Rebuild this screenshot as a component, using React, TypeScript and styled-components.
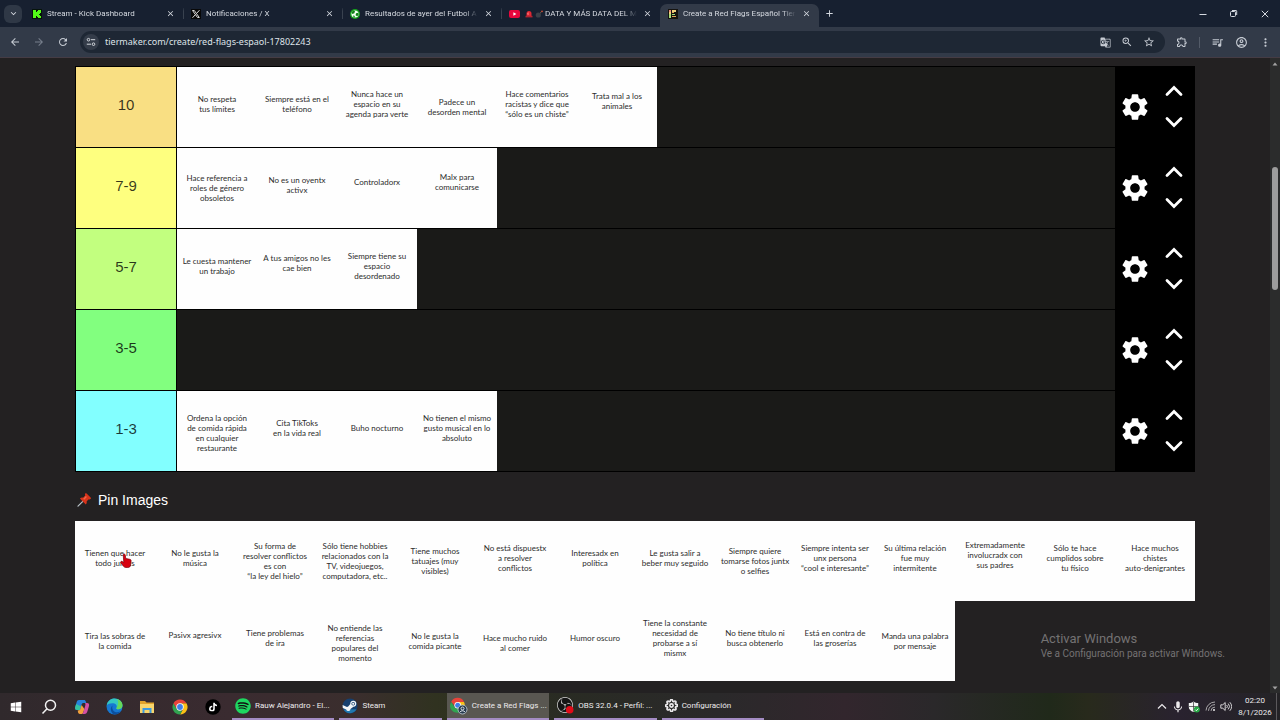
import React from "react";
import styled, { createGlobalStyle } from "styled-components";
import {
  MdAdd, MdArrowBack, MdArrowForward, MdClose, MdExpandMore, MdGTranslate, MdMoreVert,
  MdOutlineAccountCircle, MdOutlineExtension, MdQueueMusic, MdRefresh, MdSettings,
  MdStarOutline, MdZoomIn, MdMic,
} from "react-icons/md";
import { FaSpotify, FaTiktok, FaWindows } from "react-icons/fa";
import { SiObsstudio } from "react-icons/si";
import { FiSettings } from "react-icons/fi";

const uiFont = `Roboto, "Noto Sans", sans-serif`;
const addressFont = `"Noto Sans", "Open Sans", sans-serif`;
const pageFont = `"Liberation Sans", Arial, sans-serif`;
const tileFont = `Lato, "Open Sans", sans-serif`;

const GlobalStyle = createGlobalStyle`
  *, *::before, *::after { box-sizing: border-box; }
  body { margin: 0; background: #232122; font-family: ${pageFont}; }
  button { padding: 0; border: 0; background: none; color: inherit; font: inherit; cursor: pointer; }
  svg { display: block; flex: none; }
`;

const Screen = styled.div`
  display: flex;
  flex-direction: column;
  min-height: 100vh;
`;

/* Browser chrome */

const TabStrip = styled.header`
  display: flex;
  align-items: flex-end;
  height: 27px;
  background: #172030;
  color: #d5d9e0;
  font: 8px/12px ${uiFont};
`;

const TabSearch = styled.button`
  display: grid;
  place-items: center;
  align-self: center;
  flex: none;
  width: 18px;
  height: 18px;
  margin: 0 2px 0 4px;
  border-radius: 6px;
  background: #2f3846;
`;

const TabList = styled.div`
  display: flex;
  flex: 0 1 795px;
  min-width: 0;
`;

const Tab = styled.div<{ $active?: boolean; $divided?: boolean }>`
  display: flex;
  align-items: center;
  gap: 5px;
  flex: 1 1 0;
  min-width: 0;
  height: 23px;
  padding: 0 8px 4px;
  border-radius: 7px 7px 0 0;
  background: ${(p) => (p.$active ? "#323a48" : "transparent")};
  background-image: ${(p) => (p.$divided ? "linear-gradient(#39424f, #39424f)" : "none")};
  background-size: 1px 11px;
  background-position: left 4px;
  background-repeat: no-repeat;
`;

const TabTitle = styled.span`
  display: flex;
  align-items: center;
  gap: 2px;
  flex: 1;
  min-width: 0;
  white-space: nowrap;
  mask-image: linear-gradient(90deg, #000 88%, transparent);
`;

const IconButton = styled.button<{ $size: number }>`
  display: grid;
  place-items: center;
  flex: none;
  width: ${(p) => p.$size}px;
  height: ${(p) => p.$size}px;
`;

const NewTab = styled(IconButton)`
  align-self: center;
  margin-left: 4px;
`;

const WindowButtons = styled.div`
  display: flex;
  align-self: center;
  margin-left: auto;
`;

const WindowButton = styled.button`
  display: grid;
  place-items: center;
  width: 31px;
  height: 26px;
`;

const Toolbar = styled.nav`
  display: flex;
  align-items: center;
  height: 31px;
  padding: 0 3px;
  border-bottom: 1px solid #453c44;
  background: #323a48;
  color: #c6cbd3;
`;

const AddressBar = styled.label`
  display: flex;
  align-items: center;
  flex: 1;
  min-width: 0;
  height: 22px;
  margin: 0 5px;
  padding: 0 5px 0 3px;
  border-radius: 11px;
  background: #1e2734;
`;

const SiteInfo = styled.span`
  display: grid;
  place-items: center;
  flex: none;
  width: 16px;
  height: 16px;
  border-radius: 8px;
  background: #343c49;
`;

const Address = styled.input`
  flex: 1;
  min-width: 0;
  height: 16px;
  padding: 0 6px;
  border: 0;
  outline: 0;
  background: none;
  color: #dfe3e9;
  font: 9px/16px ${addressFont};
`;

const ToolDivider = styled.span`
  width: 1px;
  height: 11px;
  margin: 0 5px;
  background: #535b68;
`;

/* Tier list page */

const Viewport = styled.div`
  position: relative;
  display: flex;
  flex: 1;
`;

const Main = styled.main`
  flex: 1;
  min-width: 0;
  padding: 8px 16px 0;
`;

const Content = styled.div`
  max-width: 1120px;
  margin: 0 auto;
`;

const Board = styled.section`
  border: 1px solid #000;
  background: #000;
`;

const TierRow = styled.div`
  display: flex;
  min-height: 80px;

  & + & {
    margin-top: 1px;
  }
`;

const TierLabel = styled.div<{ $color: string }>`
  display: grid;
  place-items: center;
  flex: none;
  width: 100px;
  margin-right: 1px;
  padding-bottom: 4px;
  background: ${(p) => p.$color};
  color: rgba(0, 0, 0, 0.78);
  font-size: 15px;
  line-height: 18px;
`;

const DropZone = styled.div`
  display: flex;
  flex-wrap: wrap;
  flex: 1;
  background: #1a1a18;
`;

type Level = "high" | "upper" | "middle" | "lower";

const levelPadding: Record<Level, string> = {
  high: "0 0 12px",
  upper: "0 0 6px",
  middle: "0",
  lower: "4px 0 0",
};

const TileBox = styled.div<{ $level: Level }>`
  display: grid;
  place-items: center;
  width: 80px;
  height: 80px;
  padding: ${(p) => levelPadding[p.$level]};
  background: #fefefe;
  color: #2c2c2c;
  font: 8px/10px ${tileFont};
  text-align: center;
  white-space: pre;
  cursor: grab;
`;

const Controls = styled.div`
  display: flex;
  flex: none;
  align-items: center;
  width: 79px;
  padding-bottom: 1px;
  color: #fff;
`;

const SettingsButton = styled(IconButton)`
  width: 39px;
`;

const MoveButtons = styled.div`
  display: grid;
  gap: 11px;
  width: 40px;
  justify-items: center;
`;

const PinHeading = styled.h2`
  display: flex;
  align-items: center;
  gap: 7px;
  margin: 0;
  padding: 19px 0 12px 2px;
  color: #fff;
  font-size: 14px;
  font-weight: 400;
  line-height: 18px;
`;

const PinArea = styled.section`
  display: flex;
  flex-wrap: wrap;
`;

const Scrollbar = styled.div`
  display: flex;
  flex-direction: column;
  align-items: center;
  justify-content: space-between;
  flex: none;
  width: 10px;
  padding: 4px 0 3px;
  background: #2b2c2c;
`;

const ScrollTrack = styled.div`
  flex: 1;
  padding-top: 101px;
`;

const ScrollThumb = styled.div`
  width: 6px;
  height: 123px;
  border-radius: 3px;
  background: #9d9d9d;
`;

const Watermark = styled.aside`
  position: absolute;
  right: 55px;
  bottom: 32px;
  color: #747273;
  font: 10px/14px ${uiFont};
  pointer-events: none;
`;

const WatermarkTitle = styled.div`
  font-size: 13px;
  line-height: 16px;
`;

const Pointer = styled.svg`
  position: absolute;
  left: 120px;
  top: 495px;
  pointer-events: none;
`;

/* Windows taskbar */

const Taskbar = styled.footer`
  display: flex;
  align-items: stretch;
  height: 27px;
  background: linear-gradient(90deg, #30292c 0, #3a2b30 18%, #3a2e2d 28%, #303220 34%, #292b23 44%, #2a292a 56%, #32262d 66%, #2a282a 73%, #20291a 82%, #282a1c 85%, #29222f 92%, #242326 100%);
  color: #eceaec;
  font: 8px/12px ${uiFont};
`;

const Launcher = styled.button`
  display: grid;
  place-items: center;
  flex: 1;
`;

const Launchers = styled.div`
  display: flex;
  flex: none;
  width: 229px;
  margin-right: 3px;
`;

const RunningApps = styled.div`
  display: flex;
  gap: 5px;
  flex: 0 1 532px;
  min-width: 0;
`;

const RunningApp = styled.button<{ $active?: boolean }>`
  display: flex;
  align-items: center;
  gap: 4px;
  flex: 1;
  min-width: 0;
  padding: 0 3px;
  border-bottom: 2px solid #a48cc4;
  background: ${(p) => (p.$active ? "#595751" : "transparent")};
  white-space: nowrap;
  text-align: left;
`;

const Tray = styled.div`
  display: flex;
  align-items: center;
  margin-left: auto;
`;

const TrayButton = styled.button`
  display: grid;
  place-items: center;
  width: 16px;
  height: 27px;
`;

const Clock = styled.time`
  width: 42px;
  text-align: center;
`;

const ShowDesktop = styled.button`
  width: 4px;
  height: 27px;
  border-left: 1px solid #5b595c;
`;

/* Drawings */

const KickIcon = () => (
  <svg width="10" height="10" viewBox="0 0 10 10"><path fill="#06140a" d="M0 0h10v10H0z" /><path fill="#53fc18" d="M1 1h3v2h1V2h1V1h3v3H8v1H7v1h1v1h1v2H6V8H5V7H4v2H1z" /></svg>
);
const XIcon = () => (
  <svg width="10" height="10" viewBox="0 0 10 10"><path fill="#080808" d="M0 0h10v10H0z" /><path stroke="#d8d8d8" fill="none" d="M1.5 1.5h1.8l5 7H6.5zM8.5 1.2 5.6 4.4M4.3 5.7 1.5 8.8" /></svg>
);
const BallIcon = () => (
  <svg width="10" height="10" viewBox="0 0 10 10"><circle cx="5" cy="5" r="5" fill="#16a51c" /><circle cx="5" cy="5" r="3.6" fill="#f2fff2" /><path fill="#138019" d="m3 1.600 2 .4-.6 2.200-2 .9-.9-1.300zM6 4.200l2.300-.5.3 2.300-1.500 1.200-1.500-1zM3 6.400l1.500.3.5 1.700-1.400-.2z" /></svg>
);
const YouTubeIcon = () => (
  <svg width="11" height="10" viewBox="0 0 11 10"><rect y="1" width="11" height="8" rx="2" fill="#e8063c" /><path fill="#fff" d="m4.4 3.2 3 1.8-3 1.8z" /></svg>
);
const TierIcon = () => (
  <svg width="10" height="10" viewBox="0 0 10 10"><path fill="#15130f" d="M0 0h10v10H0z" /><path fill="#e98a78" d="M1 1h2v2H1z" /><path fill="#eed07c" d="M1 3h2v2H1zM4 1h4v2H4z" /><path fill="#a7dc78" d="M1 5h2v4H1zM4 5h3v1H4z" /><path fill="#dfa75f" d="M4 3h2v1H4zM4 7h4v1H4z" /></svg>
);
const SirenIcon = () => (
  <svg width="8" height="8" viewBox="0 0 8 8"><path fill="#e02733" d="M1.5 6V3.5a2.5 2.5 0 0 1 5 0V6z" /><path fill="#b32430" d="M.5 5.8h7v1.6h-7z" /><path fill="#ff8d8d" d="M2.6 3.2 3.5 2v3h-.9z" /></svg>
);
const BombIcon = () => (
  <svg width="8" height="8" viewBox="0 0 8 8"><circle cx="3.3" cy="5" r="2.6" fill="#3b4149" /><path stroke="#6b6152" fill="none" d="M5 3.2 6.5 1.8" /><circle cx="7" cy="1.4" r=".8" fill="#e05034" /></svg>
);
const TuneIcon = () => (
  <svg width="10" height="10" viewBox="0 0 10 10" fill="none" stroke="#d3d7dd"><circle cx="2.5" cy="2.7" r="1.3" /><path d="M5 2.7h4.2M.8 7.2H5" /><circle cx="7.5" cy="7.2" r="1.3" /></svg>
);
const ChevronIcon = ({ down }: { down?: boolean }) => (
  <svg width="18" height="12" viewBox="0 0 18 12" fill="none" stroke="currentColor" strokeWidth="2.8" strokeLinecap="round" strokeLinejoin="miter">
    <path d={down ? "m2 2.5 7 7 7-7" : "m2 9.5 7-7 7 7"} />
  </svg>
);
const PushpinIcon = () => (
  <svg width="14" height="14" viewBox="0 0 14 14"><path stroke="#b9c3c9" strokeWidth="1.2" strokeLinecap="round" d="M1 13.2 5.6 8.6" /><path fill="#d8341b" d="M8.2.6c.5-.5 1-.3 1.4 0l4 4c.5.5.4 1.1-.1 1.5-.5.5-1.2.5-1.7.2L9.700 8.300c.3 1.300-.1 2.300-.9 3.100L2.900 5.500c.9-.8 2-1.100 3.100-.8l2.200-2.200c-.3-.6-.4-1.400 0-1.900z" /><path fill="#f2674a" d="m8.900 3.100 1 1-2.700 2.600-1-.9z" /></svg>
);
const SearchIcon = () => (
  <svg width="16" height="16" viewBox="0 0 16 16" fill="none" stroke="#f2f2f2" strokeWidth="1.5"><circle cx="9.500" cy="6.300" r="5" /><path d="M5.800 9.900 1.500 14.500" /></svg>
);
const CopilotIcon = () => (
  <svg width="16" height="16" viewBox="0 0 16 16">
    <path fill="#2582dc" d="M5 1h5c1 0 1.500.6 1.800 1.500L12.300 4H9.500c-1 0-1.600.6-1.900 1.600L6 11H3.200C1.300 11 .7 9.700 1.200 8l1.500-5C3 1.800 3.800 1 5 1z" />
    <path fill="#35c2a0" d="M2.200 5 1.200 8c-.5 1.700.1 3 2 3H6l1-3.500z" />
    <path fill="#f2a13c" d="M3.700 11.500 6 11l1.600-5 2.800 4-1.200 3.400C8.900 14.400 8.200 15 7 15H5.800c-.9 0-1.500-.5-1.700-1.400z" />
    <path fill="#d550a3" d="M11 4h2c1.700 0 2.500 1.300 2 3l-1.500 5c-.5 1.800-1.400 3-3 3H7c1.200 0 1.900-.6 2.200-1.600l2-6.400c.4-1.500.3-2.300-.2-3z" />
  </svg>
);
const EdgeIcon = () => (
  <svg width="17" height="17" viewBox="0 0 16 16">
    <circle cx="8" cy="8" r="7.500" fill="#1678d2" />
    <path fill="#35c7c1" d="M.6 7.200C1.300 3 4.300.5 8 .5c4.200 0 7.500 3 7.500 6.300 0 2.400-1.800 3.800-3.900 3.800-1.400 0-2-.5-1.800-1 .9-1.600.2-4.300-2.900-4.600C4 4.800 1.700 5.400.6 7.200z" />
    <path fill="#66d85a" d="M10.500 1c3 1 5 3.200 5 5.800 0 2.400-1.800 3.800-3.900 3.800-1.400 0-2-.5-1.800-1C11.200 7.800 12.300 4 10.500 1z" />
    <path fill="#0c4f9e" d="M6.200 7c-1.200 2.800.8 6.400 4.300 6.400 1.300 0 2.600-.4 3.600-1.100A7.500 7.500 0 0 1 8 15.500C5.500 15.200 2.500 10 6.200 7z" />
  </svg>
);
const FolderIcon = () => (
  <svg width="16" height="14" viewBox="0 0 16 14"><path fill="#e0a32c" d="M1 1h5l1.500 1.500H15V8H1z" /><path fill="#f8d56c" d="M1 4h14v9H1z" /><path fill="#3c9be0" d="M3.500 8h9v5h-2V10h-5v3h-2z" /></svg>
);
const ChromeIcon = () => (
  <svg width="16" height="16" viewBox="0 0 16 16">
    <path fill="#fbc116" d="M14.500 4.250A7.500 7.500 0 0 1 8 15.500L11.300 9.700 8 4.300z" />
    <path fill="#31a350" d="M8 15.500A7.500 7.500 0 0 1 1.500 4.250L4.800 9.900 8 11.500l2.200.3z" />
    <path fill="#e8433a" d="M8 4.300h6.500A7.500 7.500 0 0 0 1.500 4.250L4.700 9.800z" />
    <circle cx="8" cy="8" r="3.700" fill="#fff" /><circle cx="8" cy="8" r="2.900" fill="#3f7fe8" />
  </svg>
);
const ChromeProfileIcon = () => (
  <svg width="18" height="18" viewBox="0 0 18 18">
    <path fill="#e8433a" d="M1.200 5A7 7 0 0 1 14 5H8L5 9z" /><path fill="#fbc116" d="M8 5h6a7 7 0 0 1-5 10l2-6z" /><path fill="#31a350" d="M1.200 5 5 11l4 1v3.500A7 7 0 0 1 1.200 5z" />
    <circle cx="7.700" cy="8.300" r="3.300" fill="#fff" /><circle cx="7.700" cy="8.300" r="2.500" fill="#3f7fe8" />
    <circle cx="12.500" cy="12.500" r="4.500" fill="#26394c" stroke="#c6d0da" strokeWidth=".8" /><circle cx="12.500" cy="11.500" r="1.500" fill="none" stroke="#dbe3ea" /><path fill="none" stroke="#dbe3ea" d="M10 15c1-1.600 4-1.600 5 0" />
  </svg>
);
const TikTokIcon = () => (
  <svg width="16" height="16" viewBox="0 0 16 16"><circle cx="8" cy="8" r="7.700" fill="#000" /><FaTiktok x="3.500" y="3.500" size={9} color="#fff" /></svg>
);
const SpotifyIcon = () => (
  <svg width="16" height="16" viewBox="0 0 16 16"><circle cx="8" cy="8" r="7" fill="#101010" /><FaSpotify size={16} color="#1ed760" /></svg>
);
const SteamIcon = () => (
  <svg width="16" height="16" viewBox="0 0 16 16"><circle cx="8" cy="8" r="7.500" fill="#17406f" /><path fill="#2178ae" d="M1.500 11.500a7.500 7.500 0 0 0 13-.2z" /><path fill="#f3f6f8" d="M.6 7 5 8.900l1.200-.3 2.100-2.700a3 3 0 1 1 3.100 2.800L8.500 10.900a2.200 2.200 0 0 1-4.300.6L.8 10z" /><circle cx="11.200" cy="5.800" r="1.800" fill="#17406f" /><circle cx="11.200" cy="5.800" r="1.100" fill="#f3f6f8" /></svg>
);
const ObsIcon = () => (
  <svg width="17" height="17" viewBox="0 0 17 17"><circle cx="8" cy="8" r="7.500" fill="#151515" /><SiObsstudio size={16} color="#d6d6d6" /><circle cx="12.700" cy="12.700" r="3.800" fill="#e20b18" /></svg>
);
const RestoreIcon = () => (
  <svg width="9" height="9" viewBox="0 0 9 9" fill="none" stroke="currentColor"><rect x="1.500" y="2.500" width="5" height="5" rx="1" /><path d="M3 1.500h4a.7.7 0 0 1 .7.7V6" /></svg>
);
const ShieldIcon = () => (
  <svg width="12" height="12" viewBox="0 0 12 12"><path fill="#f4f4f4" d="M5.500.5c1.500 1 3 1.500 4.700 1.500v4c0 2.300-2 4.200-4.700 5C2.800 10.200.8 8.300.8 6V2C2.500 2 4 1.500 5.500.5z" /><path stroke="#333" strokeWidth=".7" d="M5.500 1v9.500M1 5.500h9" /><circle cx="8.800" cy="8.600" r="3" fill="#27a745" /><path fill="none" stroke="#fff" strokeWidth=".9" d="m7.400 8.700 1 1L10.300 7.600" /></svg>
);
const WifiIcon = () => (
  <svg width="11" height="11" viewBox="0 0 11 11" fill="none" stroke="#a8a6a9"><path d="M1 9.500A9 9 0 0 1 10 1M3.500 9.800A6.500 6.500 0 0 1 10 3.600M6 9.900a4 4 0 0 1 4-3.800" /><circle cx="9" cy="9" r="1" fill="#eee" stroke="none" /></svg>
);
const VolumeIcon = () => (
  <svg width="12" height="11" viewBox="0 0 12 11" fill="none" stroke="#e6e4e7" strokeWidth=".9"><path d="M.8 3.800h2L5.200 1.500v8L2.800 7.200h-2zM6.700 4a2.200 2.200 0 0 1 0 3M8.200 2.600a4.200 4.200 0 0 1 0 5.800M9.800 1.200a6 6 0 0 1 0 8.600" /></svg>
);

/* Data */

type TileData = { text: string; level?: Level };

const tabs = [
  { title: "Stream - Kick Dashboard", icon: <KickIcon /> },
  { title: "Notificaciones / X", icon: <XIcon /> },
  { title: "Resultados de ayer del Futbol A", icon: <BallIcon /> },
  { title: "DATA Y MÁS DATA DEL M", icon: <YouTubeIcon />, emoji: true },
  { title: "Create a Red Flags Español Tier", icon: <TierIcon />, active: true },
];

const tiers: { name: string; color: string; tiles: TileData[] }[] = [
  {
    name: "10",
    color: "#f9df83",
    tiles: [
      { text: "No respeta\ntus límites" },
      { text: "Siempre está en el\nteléfono" },
      { text: "Nunca hace un\nespacio en su\nagenda para verte" },
      { text: "Padece un\ndesorden mental", level: "middle" },
      { text: "Hace comentarios\nracistas y dice que\n“sólo es un chiste”" },
      { text: "Trata mal a los\nanimales", level: "high" },
    ],
  },
  {
    name: "7-9",
    color: "#feff7f",
    tiles: [
      { text: "Hace referencia a\nroles de género\nobsoletos", level: "middle" },
      { text: "No es un oyentx\nactivx" },
      { text: "Controladorx", level: "high" },
      { text: "Malx para\ncomunicarse", level: "high" },
    ],
  },
  {
    name: "5-7",
    color: "#c2ff7f",
    tiles: [
      { text: "Le cuesta mantener\nun trabajo" },
      { text: "A tus amigos no les\ncae bien", level: "high" },
      { text: "Siempre tiene su\nespacio\ndesordenado" },
    ],
  },
  { name: "3-5", color: "#82ff7f", tiles: [] },
  {
    name: "1-3",
    color: "#82ffff",
    tiles: [
      { text: "Ordena la opción\nde comida rápida\nen cualquier\nrestaurante", level: "lower" },
      { text: "Cita TikToks\nen la vida real" },
      { text: "Buho nocturno" },
      { text: "No tienen el mismo\ngusto musical en lo\nabsoluto" },
    ],
  },
];

const pinned: TileData[] = [
  { text: "Tienen que hacer\ntodo juntxs" },
  { text: "No le gusta la\nmúsica" },
  { text: "Su forma de\nresolver conflictos\nes con\n“la ley del hielo”", level: "middle" },
  { text: "Sólo tiene hobbies\nrelacionados con la\nTV, videojuegos,\ncomputadora, etc..", level: "middle" },
  { text: "Tiene muchos\ntatuajes (muy\nvisibles)", level: "middle" },
  { text: "No está dispuestx\na resolver\nconflictos" },
  { text: "Interesadx en\npolítica" },
  { text: "Le gusta salir a\nbeber muy seguido" },
  { text: "Siempre quiere\ntomarse fotos juntx\no selfies", level: "middle" },
  { text: "Siempre intenta ser\nunx persona\n“cool e interesante”" },
  { text: "Su última relación\nfue muy\nintermitente" },
  { text: "Extremadamente\ninvolucradx con\nsus padres", level: "high" },
  { text: "Sólo te hace\ncumplidos sobre\ntu físico" },
  { text: "Hace muchos\nchistes\nauto-denigrantes" },
  { text: "Tira las sobras de\nla comida", level: "middle" },
  { text: "Pasivx agresivx", level: "high" },
  { text: "Tiene problemas\nde ira" },
  { text: "No entiende las\nreferencias\npopulares del\nmomento", level: "lower" },
  { text: "No le gusta la\ncomida picante", level: "middle" },
  { text: "Hace mucho ruido\nal comer", level: "lower" },
  { text: "Humor oscuro" },
  { text: "Tiene la constante\nnecesidad de\nprobarse a sí\nmismx" },
  { text: "No tiene título ni\nbusca obtenerlo" },
  { text: "Está en contra de\nlas groserías" },
  { text: "Manda una palabra\npor mensaje", level: "middle" },
];

const launchers = [
  { name: "Inicio", icon: <FaWindows size={12} color="#fff" /> },
  { name: "Buscar", icon: <SearchIcon /> },
  { name: "Copilot", icon: <CopilotIcon /> },
  { name: "Edge", icon: <EdgeIcon /> },
  { name: "Explorador", icon: <FolderIcon /> },
  { name: "Chrome", icon: <ChromeIcon /> },
  { name: "TikTok", icon: <TikTokIcon /> },
];

const running = [
  { title: "Rauw Alejandro - El...", icon: <SpotifyIcon /> },
  { title: "Steam", icon: <SteamIcon /> },
  { title: "Create a Red Flags ...", icon: <ChromeProfileIcon />, active: true },
  { title: "OBS 32.0.4 - Perfil: ...", icon: <ObsIcon /> },
  { title: "Configuración", icon: <FiSettings size={13} strokeWidth={3} /> },
];

const Tile = ({ text, level = "upper" }: TileData) => (
  <TileBox $level={level} draggable>{text}</TileBox>
);

export default function App() {
  return (
    <Screen>
      <GlobalStyle />
      <TabStrip>
        <TabSearch aria-label="Buscar pestañas"><MdExpandMore size={11} /></TabSearch>
        <TabList>
          {tabs.map((t, i) => (
            <Tab key={t.title} $active={t.active} $divided={i > 0 && !t.active}>
              {t.icon}
              <TabTitle>{t.emoji && <><SirenIcon /><BombIcon /></>}{t.title}</TabTitle>
              <IconButton $size={10} aria-label="Cerrar pestaña"><MdClose size={9} /></IconButton>
            </Tab>
          ))}
        </TabList>
        <NewTab $size={12} aria-label="Nueva pestaña"><MdAdd size={11} /></NewTab>
        <WindowButtons>
          <WindowButton aria-label="Minimizar"><svg width="8" height="8" viewBox="0 0 8 8"><path stroke="currentColor" d="M.5 4.500h7" /></svg></WindowButton>
          <WindowButton aria-label="Restaurar"><RestoreIcon /></WindowButton>
          <WindowButton aria-label="Cerrar"><svg width="8" height="8" viewBox="0 0 8 8"><path stroke="currentColor" d="m.8.8 6.400 6.400M7.200.8.8 7.200" /></svg></WindowButton>
        </WindowButtons>
      </TabStrip>
      <Toolbar>
        <IconButton $size={24} aria-label="Atrás"><MdArrowBack size={12} /></IconButton>
        <IconButton $size={24} aria-label="Adelante"><MdArrowForward size={12} color="#767e8b" /></IconButton>
        <IconButton $size={24} aria-label="Recargar"><MdRefresh size={12} /></IconButton>
        <AddressBar>
          <SiteInfo><TuneIcon /></SiteInfo>
          <Address aria-label="Dirección" defaultValue="tiermaker.com/create/red-flags-espaol-17802243" />
          <IconButton $size={22} aria-label="Traducir"><MdGTranslate size={11} /></IconButton>
          <IconButton $size={22} aria-label="Zoom"><MdZoomIn size={12} /></IconButton>
          <IconButton $size={22} aria-label="Favoritos"><MdStarOutline size={12} /></IconButton>
        </AddressBar>
        <IconButton $size={24} aria-label="Extensiones"><MdOutlineExtension size={12} /></IconButton>
        <ToolDivider />
        <IconButton $size={24} aria-label="Multimedia"><MdQueueMusic size={13} /></IconButton>
        <IconButton $size={24} aria-label="Perfil"><MdOutlineAccountCircle size={13} /></IconButton>
        <IconButton $size={24} aria-label="Menú"><MdMoreVert size={13} /></IconButton>
      </Toolbar>

      <Viewport>
        <Main>
          <Content>
            <Board>
              {tiers.map((tier) => (
                <TierRow key={tier.name}>
                  <TierLabel $color={tier.color}>{tier.name}</TierLabel>
                  <DropZone>{tier.tiles.map((t) => <Tile key={t.text} {...t} />)}</DropZone>
                  <Controls>
                    <SettingsButton $size={32} aria-label={`Ajustes ${tier.name}`}><MdSettings size={32} /></SettingsButton>
                    <MoveButtons>
                      <IconButton $size={20} aria-label="Subir"><ChevronIcon /></IconButton>
                      <IconButton $size={20} aria-label="Bajar"><ChevronIcon down /></IconButton>
                    </MoveButtons>
                  </Controls>
                </TierRow>
              ))}
            </Board>
            <PinHeading><PushpinIcon />Pin Images</PinHeading>
            <PinArea>{pinned.map((t) => <Tile key={t.text} {...t} />)}</PinArea>
          </Content>
        </Main>
        <Scrollbar>
          <svg width="6" height="4" viewBox="0 0 6 4"><path fill="#a3a3a3" d="m3 .5 2.500 3h-5z" /></svg>
          <ScrollTrack><ScrollThumb /></ScrollTrack>
          <svg width="6" height="4" viewBox="0 0 6 4"><path fill="#a3a3a3" d="M.5.500h5L3 3.500z" /></svg>
        </Scrollbar>
        <Watermark>
          <WatermarkTitle>Activar Windows</WatermarkTitle>
          Ve a Configuración para activar Windows.
        </Watermark>
        <Pointer width="12" height="16" viewBox="0 0 12 16">
          <path fill="#d9000f" stroke="#7d0009" strokeWidth=".7" d="M3.200 1.500c.7-.9 1.800-.5 2 .4l.6 3.600 4 .8c1 .2 1.400.8 1.300 1.700l-.5 4c-.2 1.700-1.100 2.500-2.800 2.500H6c-1.200 0-2-.5-2.700-1.400L.8 9.700c-.5-.9.500-1.800 1.500-1.200l1.500.9z" />
        </Pointer>
      </Viewport>

      <Taskbar>
        <Launchers>
          {launchers.map((l) => <Launcher key={l.name} aria-label={l.name}>{l.icon}</Launcher>)}
        </Launchers>
        <RunningApps>
          {running.map((r) => (
            <RunningApp key={r.title} $active={r.active}>{r.icon}{r.title}</RunningApp>
          ))}
        </RunningApps>
        <Tray>
          <TrayButton aria-label="Iconos ocultos"><svg width="10" height="7" viewBox="0 0 10 7"><path fill="none" stroke="currentColor" strokeWidth="1.200" d="m1 5.500 4-4 4 4" /></svg></TrayButton>
          <TrayButton aria-label="Micrófono"><MdMic size={14} /></TrayButton>
          <TrayButton aria-label="Seguridad"><ShieldIcon /></TrayButton>
          <TrayButton aria-label="Red"><WifiIcon /></TrayButton>
          <TrayButton aria-label="Volumen"><VolumeIcon /></TrayButton>
          <Clock>02:20<br />8/1/2026</Clock>
          <ShowDesktop aria-label="Mostrar escritorio" />
        </Tray>
      </Taskbar>
    </Screen>
  );
}
